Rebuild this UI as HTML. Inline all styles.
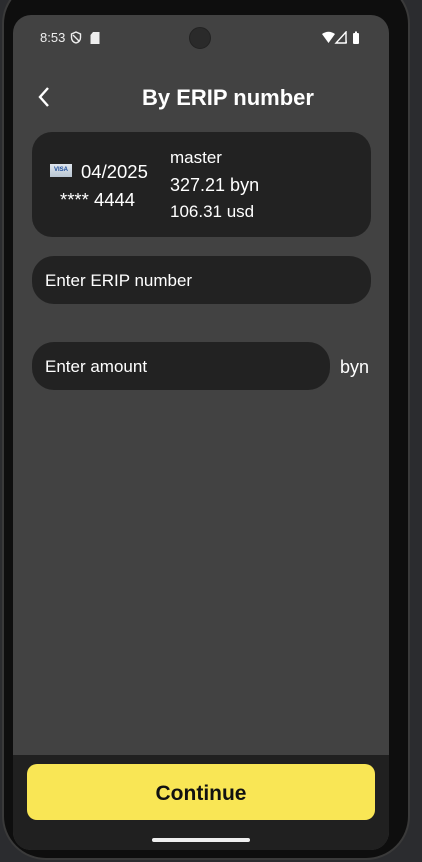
<!DOCTYPE html>
<html><head><style>
*{margin:0;padding:0;box-sizing:border-box}
body{width:422px;height:862px;background:#2b2c2f;position:relative;overflow:hidden;font-family:"Liberation Sans",sans-serif;color:#fff}
.frame{position:absolute;left:2px;top:-20px;width:408px;height:880px;border-radius:44px;background:#0e0e0e;border:2px solid #3a3a3a}
.screen{position:absolute;left:13px;top:15px;width:376px;height:835px;border-radius:18px;background:#424242;overflow:hidden}
.abs{position:absolute}
.card{position:absolute;left:19px;top:117px;width:339px;height:105px;border-radius:20px;background:#222}
.field{position:absolute;background:#222;border-radius:22px;height:48px;font-size:17px;padding-left:13px;line-height:50px}
.bottom{position:absolute;left:0;top:740px;width:376px;height:95px;background:#202020}
.btn{position:absolute;left:14px;top:9px;width:348px;height:56px;border-radius:10px;background:#f9e655;color:#111;font-weight:bold;font-size:21px;text-align:center;line-height:60px}
</style></head><body>
<div class="frame"></div>
<div class="screen">
 <div class="abs" style="left:27px;top:15px;font-size:13px;color:#eee">8:53</div>
 <svg class="abs" style="left:57px;top:16px" width="12" height="13" viewBox="0 0 12 13"><path d="M6 1L10.5 3v3.5c0 3-2 4.8-4.5 5.5C3.5 11.3 1.5 9.5 1.5 6.5V3z" fill="none" stroke="#eee" stroke-width="1.4"/><path d="M3 4l6 6" stroke="#eee" stroke-width="1.3"/></svg>
 <svg class="abs" style="left:77px;top:17px" width="10" height="12" viewBox="0 0 10 12"><path d="M3 0H9.5V12H0.5V3z" fill="#eee"/></svg>
 <div class="abs" style="left:176px;top:12px;width:22px;height:22px;border-radius:50%;background:#2a2a2a;border:1px solid #222"></div>
 <svg class="abs" style="left:309px;top:16px" width="40" height="14" viewBox="0 0 40 14"><path d="M0 3Q6.5 -1.5 13 3L6.5 12z" fill="#fff"/><path d="M24 1V12H14z" fill="none" stroke="#fff" stroke-width="1.4"/><path d="M25 12L24 5V12z" fill="#fff"/><rect x="31" y="2" width="6" height="11" rx="1" fill="#fff"/><rect x="33" y="0.5" width="2" height="2" fill="#fff"/></svg>
 <svg class="abs" style="left:24px;top:71px" width="14" height="22" viewBox="0 0 14 22"><path d="M11 2L3 11l8 9" fill="none" stroke="#fff" stroke-width="2.4"/></svg>
 <div class="abs" style="left:0;width:376px;top:70px;text-align:center;font-size:22px;font-weight:bold;padding-left:54px">By ERIP number</div>
 <div class="card">
  <div class="abs" style="left:18px;top:32px;width:22px;height:13px;background:linear-gradient(#dfe6ee,#b9c6d3);font-size:6px;color:#1a4a99;text-align:center;line-height:13px;font-weight:bold">VISA</div>
  <div class="abs" style="left:49px;top:29px;font-size:18.5px">04/2025</div>
  <div class="abs" style="left:28px;top:57px;font-size:18.5px">**** 4444</div>
  <div class="abs" style="left:138px;top:16px;font-size:17px">master</div>
  <div class="abs" style="left:138px;top:43px;font-size:18px">327.21 byn</div>
  <div class="abs" style="left:138px;top:70px;font-size:17px">106.31 usd</div>
 </div>
 <div class="field" style="left:19px;top:241px;width:339px">Enter ERIP number</div>
 <div class="field" style="left:19px;top:327px;width:298px">Enter amount</div>
 <div class="abs" style="left:327px;top:342px;font-size:18px">byn</div>
 <div class="bottom"><div class="btn">Continue</div>
  <div class="abs" style="left:139px;top:83px;width:98px;height:4px;border-radius:2px;background:#eee"></div></div>
</div>
</body></html>
